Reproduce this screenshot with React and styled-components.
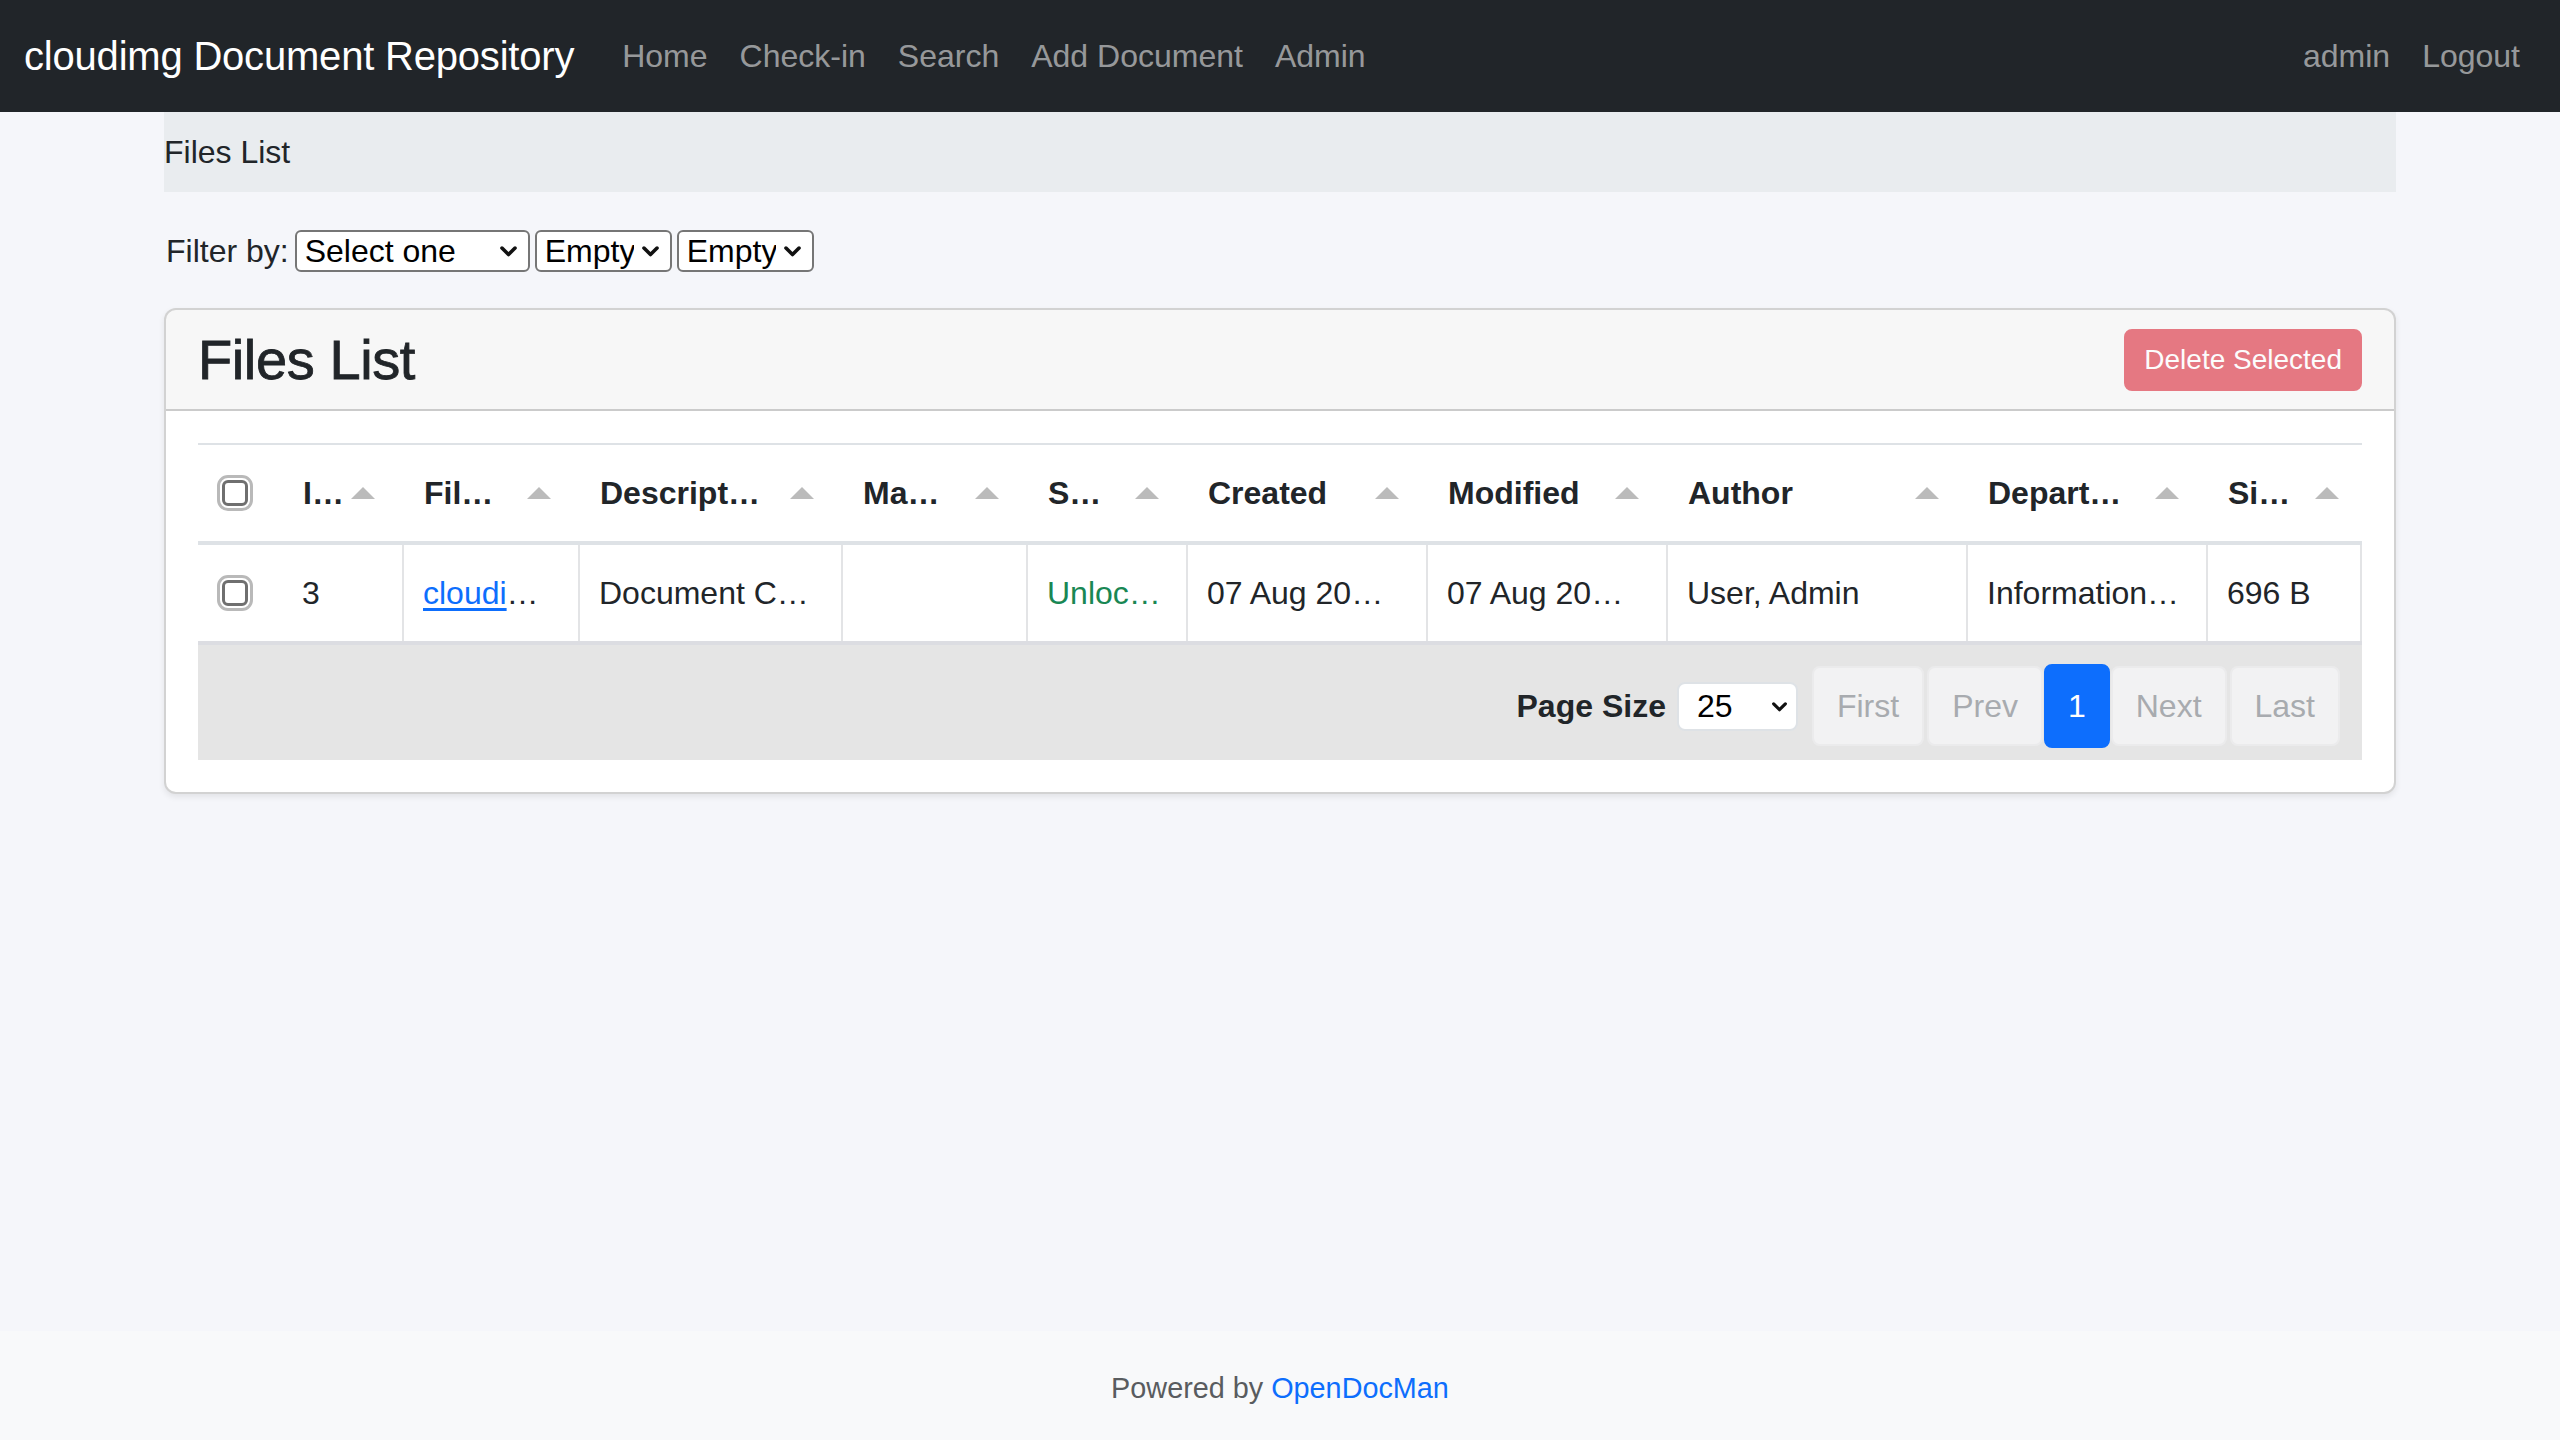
import React from "react";
import styled, { createGlobalStyle } from "styled-components";

const GlobalStyle = createGlobalStyle`
  *, *::before, *::after { box-sizing: border-box; }
  html, body { margin: 0; padding: 0; }
  body {
    background: #f5f6fa;
    font-family: "Liberation Sans", Arial, Helvetica, sans-serif;
    font-size: 32px;
    line-height: 1.5;
    color: #212529;
  }
`;

const chevron = `url("data:image/svg+xml,%3Csvg xmlns='http://www.w3.org/2000/svg' viewBox='0 0 16 10'%3E%3Cpath d='M2.5 2.5l5.5 5.5 5.5-5.5' fill='none' stroke='%23111' stroke-width='3' stroke-linecap='round' stroke-linejoin='round'/%3E%3C/svg%3E")`;

const COLS = [85, 121, 176, 263, 185, 160, 240, 240, 300, 240, 154];

const Page = styled.div`
  min-height: 100vh;
  display: flex;
  flex-direction: column;
`;

const Navbar = styled.nav`
  height: 112px;
  background: #212529;
  display: flex;
  align-items: center;
  padding: 0 24px;
`;

const Brand = styled.a`
  font-size: 40px;
  line-height: 60px;
  color: #fff;
  margin-right: 32px;
  letter-spacing: -0.2px;
  text-decoration: none;
`;

const NavList = styled.div`
  display: flex;
  align-items: center;
  margin-left: ${(p) => (p.$right ? "auto" : "0")};
`;

const NavLink = styled.a`
  padding: 16px;
  color: rgba(255, 255, 255, 0.55);
  text-decoration: none;
  line-height: 48px;
`;

const Main = styled.main`
  flex: 1;
`;

const Container = styled.div`
  width: 2232px;
  margin: 0 auto;
`;

const Breadcrumb = styled.div`
  background: #e9ecef;
  padding: 16px 0;
  line-height: 48px;
`;

const FilterRow = styled.form`
  height: 42px;
  margin: 38px 0 36px;
  display: flex;
  align-items: center;
  gap: 5px;
  padding-left: 2px;
`;

const FilterLabel = styled.label`
  margin-right: 1px;
`;

const FilterSelect = styled.select`
  appearance: none;
  width: ${(p) => p.$w}px;
  height: 42px;
  border: 2px solid #767676;
  border-radius: 6px;
  padding: 0 36px 0 8px;
  font-family: inherit;
  font-size: 32px;
  color: #000;
  background: #fff ${chevron} no-repeat right 10px center / 19px 12px;
`;

const Card = styled.section`
  background: #fff;
  border: 2px solid rgba(0, 0, 0, 0.175);
  border-radius: 12px;
  overflow: hidden;
  box-shadow: 0 3px 6px rgba(0, 0, 0, 0.08);
`;

const CardHeader = styled.header`
  display: flex;
  align-items: center;
  justify-content: space-between;
  padding: 16px 32px;
  background: rgba(0, 0, 0, 0.03);
  border-bottom: 2px solid rgba(0, 0, 0, 0.175);
`;

const Title = styled.h3`
  margin: 0;
  font-size: 56px;
  font-weight: 400;
  line-height: 1.2;
  letter-spacing: -0.4px;
  -webkit-text-stroke: 0.8px #212529;
`;

const DeleteButton = styled.button`
  font-family: inherit;
  font-size: 28px;
  line-height: 42px;
  padding: 8px 18px;
  border: 2px solid #dc3545;
  border-radius: 8px;
  background: #dc3545;
  color: #fff;
  opacity: 0.65;
`;

const CardBody = styled.div`
  padding: 32px;
`;

const Table = styled.div`
  width: 2164px;
`;

const HeaderRow = styled.div`
  display: grid;
  grid-template-columns: ${COLS.map((c) => c + "px").join(" ")};
  border-top: 2px solid #dee2e6;
  border-bottom: 4px solid #dee2e6;
  font-weight: 700;
`;

const HeaderCell = styled.div`
  height: 96px;
  display: flex;
  align-items: center;
  justify-content: ${(p) => (p.$check ? "flex-start" : "space-between")};
  padding: 0 ${(p) => p.$pr ?? 29}px 0 ${(p) => (p.$check ? 24 : 20)}px;
  white-space: nowrap;
  overflow: hidden;
`;

const SortArrow = styled.span`
  flex: none;
  width: 0;
  height: 0;
  border-left: 12px solid transparent;
  border-right: 12px solid transparent;
  border-bottom: 12px solid #bbb;
`;

const BodyRow = styled.div`
  display: grid;
  grid-template-columns: ${COLS.map((c) => c + "px").join(" ")};
`;

const BodyCell = styled.div`
  height: 96px;
  display: flex;
  align-items: center;
  padding: 0 ${(p) => (p.$check ? 0 : 20)}px 0 ${(p) => (p.$check ? 24 : 19)}px;
  border-right: ${(p) => (p.$check ? "none" : "2px solid #e3e4e6")};
  white-space: nowrap;
  overflow: hidden;
  color: ${(p) => p.$color || "#212529"};
`;

const FileLink = styled.a`
  color: #0d6efd;
  text-decoration: underline;
  text-underline-offset: 4px;
`;

const Check = styled.input.attrs({ type: "checkbox" })`
  appearance: none;
  margin: 0;
  width: 26px;
  height: 26px;
  border: 3px solid #6f6f6f;
  border-radius: 6px;
  background: #fff;
  outline: 3px solid #b9b9b9;
  outline-offset: 2px;
`;

const TableFooter = styled.div`
  display: flex;
  align-items: center;
  justify-content: flex-end;
  background: #e5e5e5;
  border-top: 4px solid #dcdde2;
  padding: 19px 22px 12px;
`;

const PageSizeLabel = styled.label`
  font-weight: 700;
  margin-right: 11px;
`;

const PageSizeSelect = styled.select`
  appearance: none;
  width: 121px;
  height: 49px;
  margin-right: 14px;
  border: 2px solid #dee2e6;
  border-radius: 8px;
  padding: 0 36px 0 18px;
  font-family: inherit;
  font-size: 32px;
  color: #000;
  background: #fff ${chevron} no-repeat right 8px center / 17px 11px;
`;

const Pager = styled.div`
  display: flex;
  align-items: center;
  gap: 3px;
`;

const PageButton = styled.button`
  font-family: inherit;
  font-size: 32px;
  line-height: 48px;
  height: ${(p) => (p.$active ? 84 : 80)}px;
  padding: 0 ${(p) => (p.$active ? 22 : 23)}px;
  margin: 0 ${(p) => (p.$active ? -2 : 0)}px;
  border: 2px solid ${(p) => (p.$active ? "#0d6efd" : "#ebebec")};
  border-radius: 8px;
  background: ${(p) => (p.$active ? "#0d6efd" : "#f2f2f3")};
  color: ${(p) => (p.$active ? "#fff" : "#a8abaf")};
  position: relative;
  z-index: ${(p) => (p.$active ? 1 : 0)};
`;

const Footer = styled.footer`
  background: #f8f9fa;
  padding: 36px 0 30px;
  text-align: center;
  font-size: 28.8px;
  line-height: 1.5;
  color: #595c5f;
`;

const FooterLink = styled.a`
  color: #0d6efd;
  text-decoration: none;
`;

const headers = [
  { label: "I…" },
  { label: "Fil…" },
  { label: "Descript…" },
  { label: "Ma…" },
  { label: "S…" },
  { label: "Created" },
  { label: "Modified" },
  { label: "Author" },
  { label: "Depart…" },
  { label: "Si…", pr: 23 },
];

export default function App() {
  return (
    <>
      <GlobalStyle />
      <Page>
        <Navbar>
          <Brand href="#">cloudimg Document Repository</Brand>
          <NavList>
            <NavLink href="#">Home</NavLink>
            <NavLink href="#">Check-in</NavLink>
            <NavLink href="#">Search</NavLink>
            <NavLink href="#">Add Document</NavLink>
            <NavLink href="#">Admin</NavLink>
          </NavList>
          <NavList $right>
            <NavLink href="#">admin</NavLink>
            <NavLink href="#">Logout</NavLink>
          </NavList>
        </Navbar>

        <Main>
          <Container>
            <Breadcrumb>Files List</Breadcrumb>

            <FilterRow onSubmit={(e) => e.preventDefault()}>
              <FilterLabel>Filter by:</FilterLabel>
              <FilterSelect $w={235} defaultValue="">
                <option value="">Select one</option>
              </FilterSelect>
              <FilterSelect $w={137} defaultValue="">
                <option value="">Empty</option>
              </FilterSelect>
              <FilterSelect $w={137} defaultValue="">
                <option value="">Empty</option>
              </FilterSelect>
            </FilterRow>

            <Card>
              <CardHeader>
                <Title>Files List</Title>
                <DeleteButton disabled>Delete Selected</DeleteButton>
              </CardHeader>
              <CardBody>
                <Table>
                  <HeaderRow>
                    <HeaderCell $check>
                      <Check />
                    </HeaderCell>
                    {headers.map((h) => (
                      <HeaderCell key={h.label} $pr={h.pr}>
                        <span>{h.label}</span>
                        <SortArrow />
                      </HeaderCell>
                    ))}
                  </HeaderRow>
                  <BodyRow>
                    <BodyCell $check>
                      <Check />
                    </BodyCell>
                    <BodyCell>3</BodyCell>
                    <BodyCell>
                      <FileLink href="#">cloudi</FileLink>…
                    </BodyCell>
                    <BodyCell>Document C…</BodyCell>
                    <BodyCell />
                    <BodyCell $color="#198754">Unloc…</BodyCell>
                    <BodyCell>07 Aug 20…</BodyCell>
                    <BodyCell>07 Aug 20…</BodyCell>
                    <BodyCell>User, Admin</BodyCell>
                    <BodyCell>Information…</BodyCell>
                    <BodyCell>696 B</BodyCell>
                  </BodyRow>
                  <TableFooter>
                    <PageSizeLabel>Page Size</PageSizeLabel>
                    <PageSizeSelect defaultValue="25">
                      <option value="10">10</option>
                      <option value="25">25</option>
                      <option value="50">50</option>
                    </PageSizeSelect>
                    <Pager>
                      <PageButton disabled>First</PageButton>
                      <PageButton disabled>Prev</PageButton>
                      <PageButton $active>1</PageButton>
                      <PageButton disabled>Next</PageButton>
                      <PageButton disabled>Last</PageButton>
                    </Pager>
                  </TableFooter>
                </Table>
              </CardBody>
            </Card>
          </Container>
        </Main>

        <Footer>
          Powered by <FooterLink href="#">OpenDocMan</FooterLink>
        </Footer>
      </Page>
    </>
  );
}
